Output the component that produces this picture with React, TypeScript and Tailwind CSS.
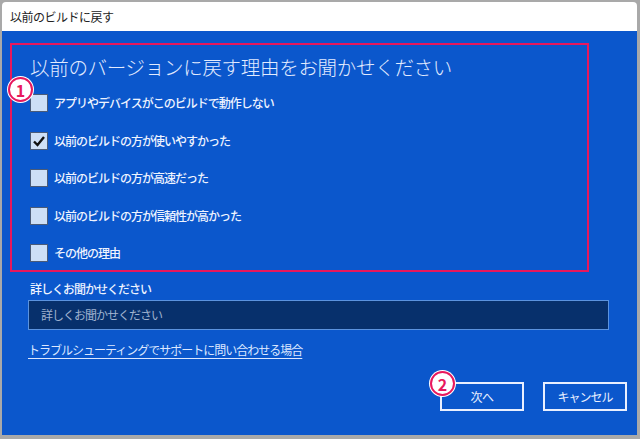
import React from "react";

const font = { fontFamily: '"Noto Sans CJK JP", "Noto Sans", sans-serif' };

function Badge({ n }: { n: string }) {
  return (
    <div className="absolute flex h-[25px] w-[25px] items-center justify-center rounded-full border-2 border-[#e8185d] bg-white text-[16px] font-bold leading-none text-[#e8185d] shadow-[0_0_0_1px_#fff]">
      {n}
    </div>
  );
}

function Item({ label, checked }: { label: string; checked?: boolean }) {
  return (
    <div className="flex h-[18px] items-center gap-[6px]">
      <div className="flex h-[18px] w-[18px] items-center justify-center border border-[#4a5b78] bg-[#cddff6]">
        {checked && (
          <svg width="14" height="14" viewBox="0 0 14 14">
            <path d="M2 7.5 L5.5 11 L12 3" fill="none" stroke="#111" strokeWidth="2.4" />
          </svg>
        )}
      </div>
      <span className="text-[12px] font-medium tracking-[-1px] text-[#eef3ff]">{label}</span>
    </div>
  );
}

export default function App() {
  return (
    <div className="h-[439px] w-[640px] bg-[#a9a9a9] pl-[2px] pr-[3px] pt-[2px] pb-[4px]" style={font}>
      <div className="flex h-full flex-col overflow-hidden rounded-t-[4px]">
        <div className="flex h-[29px] items-center bg-white pl-[8px] text-[12px] tracking-[-0.5px] text-[#222]">以前のビルドに戻す</div>
        <div className="relative flex flex-1 flex-col bg-[#0b57cc] pl-[8px]">
          <div className="relative mt-[12px] h-[229px] w-[579px] border-2 border-[#e8185d] pl-[18px] pt-[9px]">
            <div className="text-[19.5px] font-light leading-[26px] tracking-[-0.3px] text-[#e2ebff]">以前のバージョンに戻す理由をお聞かせください</div>
            <div className="mt-[14px] flex flex-col gap-[19.5px]">
              <Item label="アプリやデバイスがこのビルドで動作しない" />
              <Item label="以前のビルドの方が使いやすかった" checked />
              <Item label="以前のビルドの方が高速だった" />
              <Item label="以前のビルドの方が信頼性が高かった" />
              <Item label="その他の理由" />
            </div>
          </div>
          <div className="absolute left-[6px] top-[46px]"><Badge n="1" /></div>
          <div className="ml-[20px] mt-[8px] text-[12px] font-medium leading-[18px] tracking-[-1px] text-[#eef3ff]">詳しくお聞かせください</div>
          <div className="ml-[18px] mt-[2px] flex h-[30px] w-[581px] items-center border border-[#5b93df] bg-[#07306c] pl-[12px] text-[12px] tracking-[-1px] text-[#9fb2cf]">
            詳しくお聞かせください
          </div>
          <div className="ml-[18px] mt-[11px] text-[12px] leading-[18px] tracking-[-1px] text-[#dce7ff] underline underline-offset-[3px]">
            トラブルシューティングでサポートに問い合わせる場合
          </div>
          <div className="mr-[10px] mt-[23px] flex justify-end gap-[19px]">
            <div className="relative">
              <div className="flex h-[29px] w-[84px] items-center justify-center border-2 border-[#e9efff] text-[12px] tracking-[-0.5px] text-[#e9efff]">次へ</div>
              <div className="absolute left-[-10px] top-[-11px]"><Badge n="2" /></div>
            </div>
            <div className="flex h-[29px] w-[84px] items-center justify-center border-2 border-[#e9efff] text-[12px] tracking-[-1px] text-[#e9efff]">キャンセル</div>
          </div>
        </div>
      </div>
    </div>
  );
}
